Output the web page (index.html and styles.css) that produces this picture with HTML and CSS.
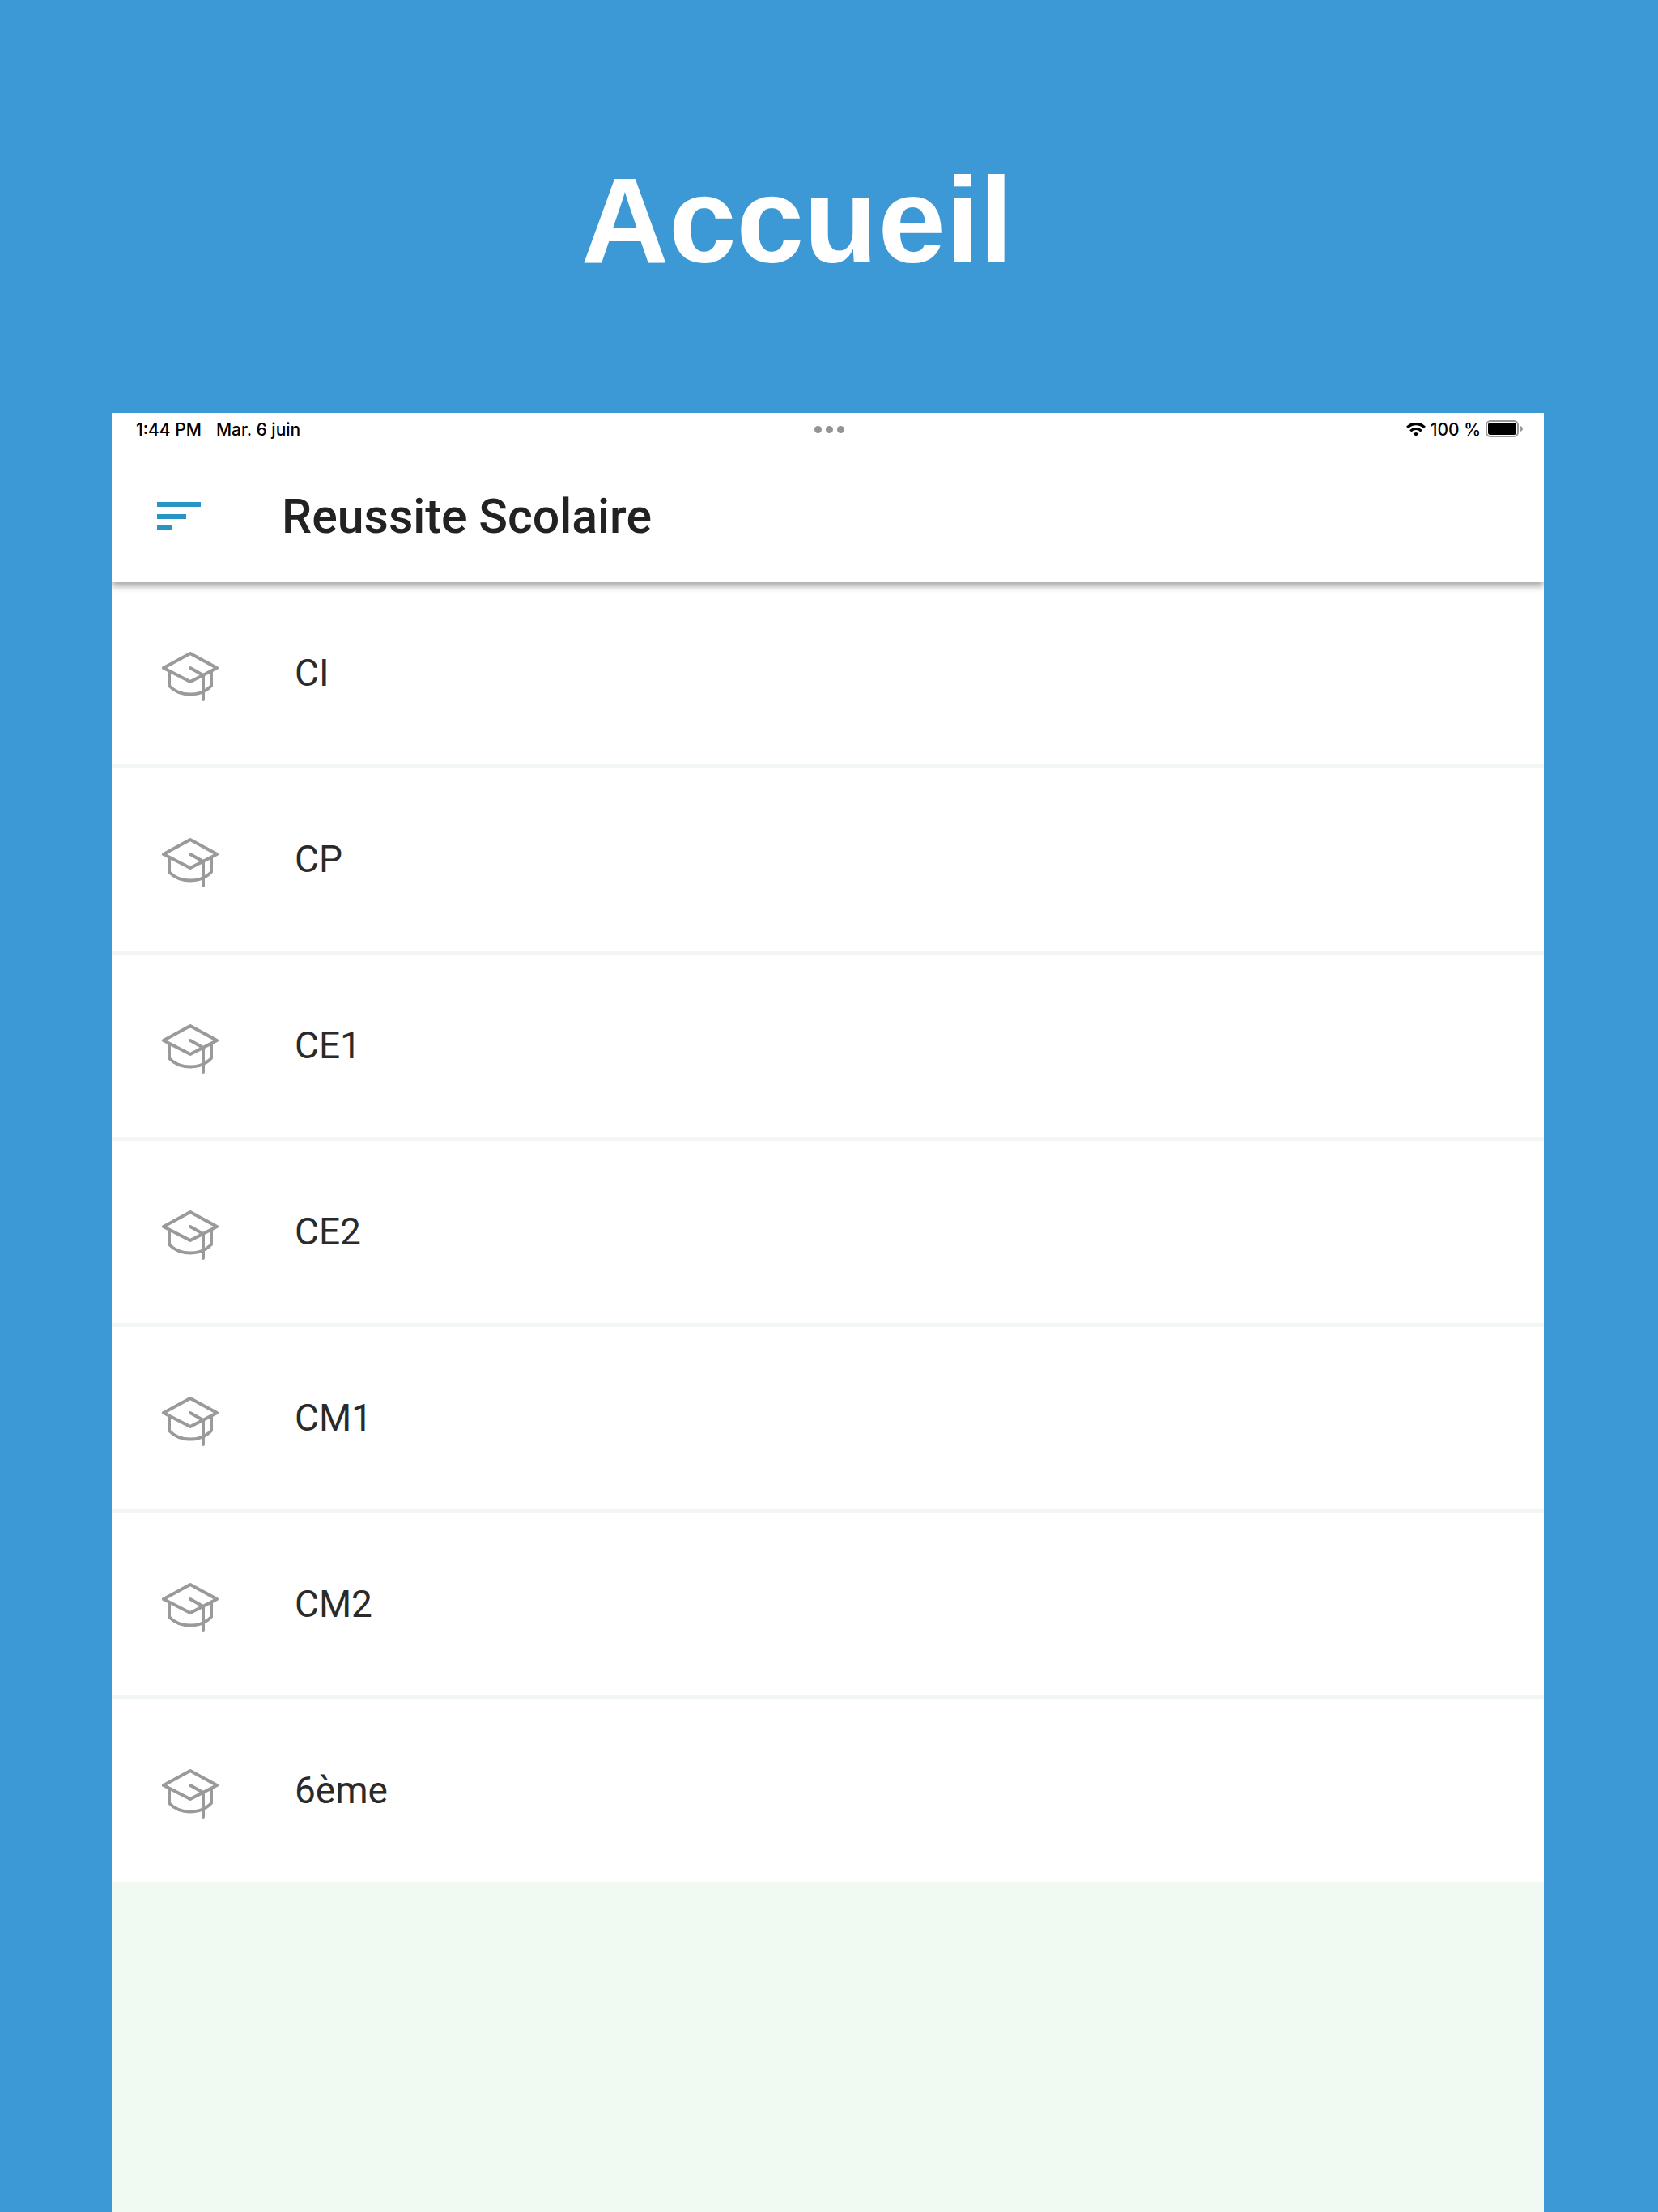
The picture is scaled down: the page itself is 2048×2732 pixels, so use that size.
FILE: index.html
```html
<!DOCTYPE html>
<html lang="fr">
<head>
    <meta charset="UTF-8">
    <meta name="viewport" content="width=device-width, initial-scale=1.0">
    <title>Reussite Scolaire</title>
    <link rel="stylesheet" href="styles.css">
</head>
<body>
    <h1>Accueil</h1>

    <main class="screen">
        <!-- Status bar -->
        <div class="status-bar">
            <div class="status-left">
                <span>1:44 PM</span>
                <span>Mar. 6 juin</span>
            </div>
            <div class="dots"><i></i><i></i><i></i></div>
            <div class="status-right">
                <svg class="wifi" viewBox="0 0 24 17" aria-hidden="true">
                    <path d="M1.3 6a15 15 0 0 1 21.4 0" fill="none" stroke="#000" stroke-width="3.4"/>
                    <path d="M5.3 10.4a9.2 9.2 0 0 1 13.4 0" fill="none" stroke="#000" stroke-width="3.2"/>
                    <path d="M12 17l-3.4-3.4a5 5 0 0 1 6.8 0z"/>
                </svg>
                <span>100 %</span>
                <svg class="battery" viewBox="0 0 46 22" aria-hidden="true">
                    <rect x="1" y="1" width="39" height="19" rx="5" fill="none" stroke="#999" stroke-width="2"/>
                    <rect x="3" y="3" width="35" height="15" rx="3"/>
                    <path d="M43 7c4 2 4 5 0 7z" fill="#999"/>
                </svg>
            </div>
        </div>

        <!-- App bar -->
        <header class="app-bar">
            <button class="menu" type="button" aria-label="Menu">
                <svg viewBox="0 0 54 36" aria-hidden="true">
                    <path d="M0 3h54M0 18h36M0 32h18" stroke="#2795c4" stroke-width="6"/>
                </svg>
            </button>
            <h2>Reussite Scolaire</h2>
        </header>

        <!-- Classes -->
        <svg class="defs" aria-hidden="true">
            <symbol id="cap" viewBox="0 0 72 64">
                <g fill="none" stroke="#9a9a9a" stroke-width="4" stroke-linejoin="round" stroke-linecap="round">
                    <path d="M3 22L36 4l33 18-33 17z"/>
                    <path d="M10 27v17c13 14 39 14 52 0V27"/>
                    <path d="M36 22l16 9v30"/>
                </g>
            </symbol>
        </svg>
        <ul class="classes">
            <li><a href="#"><svg><use href="#cap"/></svg>CI</a></li>
            <li><a href="#"><svg><use href="#cap"/></svg>CP</a></li>
            <li><a href="#"><svg><use href="#cap"/></svg>CE1</a></li>
            <li><a href="#"><svg><use href="#cap"/></svg>CE2</a></li>
            <li><a href="#"><svg><use href="#cap"/></svg>CM1</a></li>
            <li><a href="#"><svg><use href="#cap"/></svg>CM2</a></li>
            <li><a href="#"><svg><use href="#cap"/></svg>6ème</a></li>
        </ul>
    </main>
</body>
</html>
```
FILE: styles.css
```css
* {
    box-sizing: border-box;
}
body {
    font-family: Roboto, "Liberation Sans", sans-serif;
    background-color: #3d99d6;
    color: #222;
    margin: 0;
    padding: 0 141px 0 138px;
    min-height: 100vh;
    display: flex;
    flex-direction: column;
}
h1 {
    font-family: "Liberation Sans", Arial, sans-serif;
    font-size: 150px;
    line-height: 160px;
    color: #fff;
    text-align: center;
    margin: 0;
    padding: 192px 76px 158px 0;
}
.screen {
    flex: 1;
    background-color: #f0f9f2;
}

/* Status bar */
.status-bar {
    display: grid;
    grid-template-columns: 1fr auto 1fr;
    align-items: center;
    height: 40px;
    padding: 0 26px 0 30px;
    background-color: #fff;
    color: #000;
    font-family: Inter, sans-serif;
    font-size: 21px;
    font-weight: 500;
}
.status-left {
    display: flex;
    gap: 18px;
}
.status-right {
    display: flex;
    justify-content: flex-end;
    align-items: center;
    gap: 6px;
}
.dots {
    display: flex;
    gap: 5px;
}
.dots i {
    width: 9px;
    height: 9px;
    border-radius: 50%;
    background-color: #949494;
}
.wifi {
    width: 24px;
    height: 17px;
}
.battery {
    width: 46px;
    height: 22px;
}

/* App bar */
.app-bar {
    position: relative;
    display: flex;
    align-items: center;
    gap: 100px;
    height: 169px;
    padding: 6px 56px 0;
    background-color: #fff;
    box-shadow: 0 5px 8px rgba(0, 0, 0, 0.35);
    clip-path: inset(0 0 -20px 0);
}
.menu {
    padding: 0;
    border: none;
    background: none;
    cursor: pointer;
}
.menu svg {
    display: block;
    width: 54px;
    height: 36px;
}
.app-bar h2 {
    margin: 0;
    font-size: 59px;
    font-weight: 500;
}

/* Class list */
.defs {
    position: absolute;
    width: 0;
    height: 0;
}
.classes {
    list-style: none;
    margin: 0;
    padding: 0;
    background-color: #fff;
}
.classes li {
    border-bottom: 5px solid #f2f6f5;
}
.classes li:last-child {
    border-bottom: none;
}
.classes a {
    display: flex;
    align-items: center;
    gap: 93px;
    height: 225px;
    padding: 0 61px 2px;
    color: #2a2a2a;
    font-size: 46px;
    text-decoration: none;
}
.classes svg {
    width: 72px;
    height: 64px;
    margin-top: 8px;
}
```
